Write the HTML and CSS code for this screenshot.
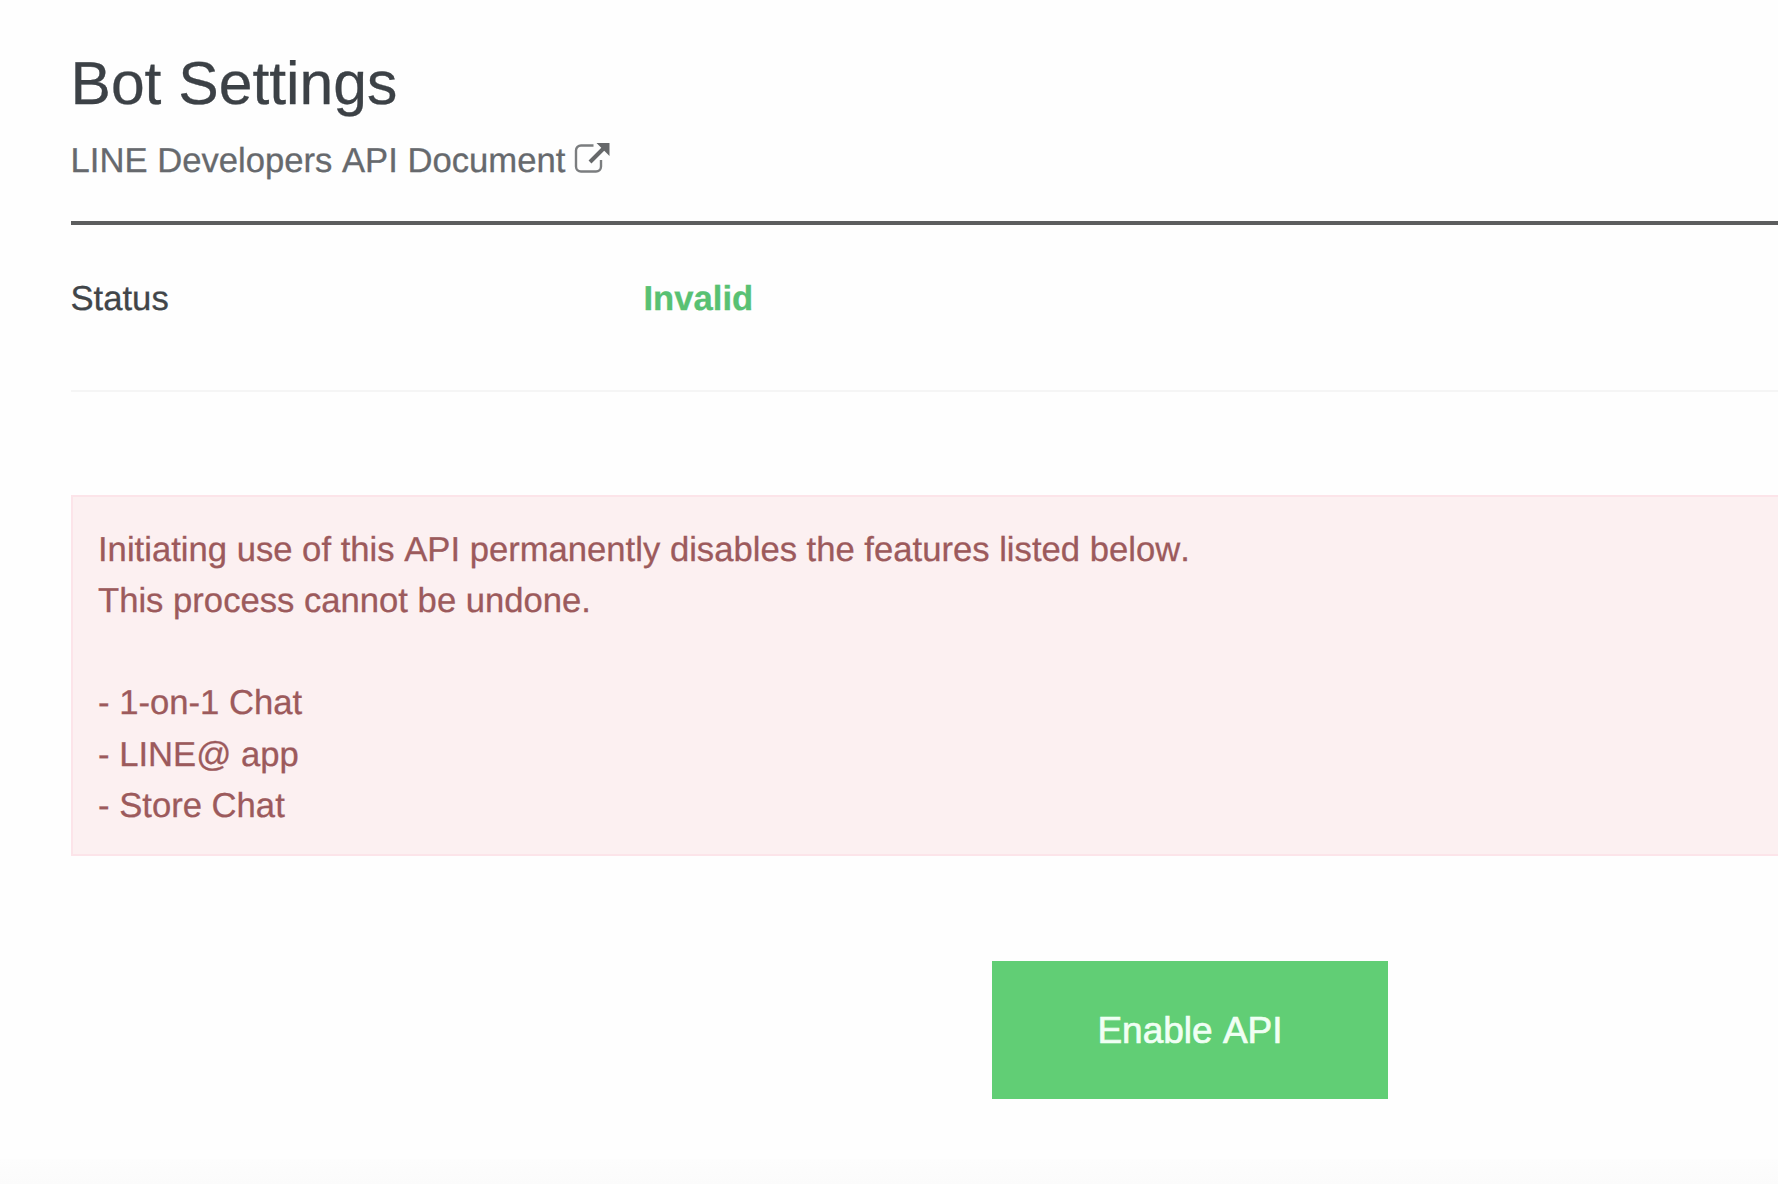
FILE: index.html
```html
<!DOCTYPE html>
<html lang="en">
<head>
<meta charset="utf-8">
<title>Bot Settings</title>
<link rel="stylesheet" href="styles.css">
</head>
<body>
<main class="page">
  <header class="page-header">
    <h1 class="title">Bot Settings</h1>
    <a class="doc-link" href="#"><span>LINE Developers API Document</span><svg class="external" viewBox="0 0 38 32" aria-hidden="true"><path d="M20.5 3.500H8a5 5 0 0 0-5 5v16a5 5 0 0 0 5 5h15a5 5 0 0 0 5-5V18" fill="none" stroke="#7b7d7f" stroke-width="2.4"/><path d="M17 20 31 6" fill="none" stroke="#66686a" stroke-width="4"/><path d="M23.500 1H36.500v13Z" fill="#66686a"/></svg></a>
  </header>
  <dl class="status-row">
    <dt class="status-label">Status</dt>
    <dd class="status-value">Invalid</dd>
  </dl>
  <section class="alert">
    <p>Initiating use of this API permanently disables the features listed below.<br>This process cannot be undone.</p>
    <ul class="features">
      <li>- 1-on-1 Chat</li>
      <li>- LINE@ app</li>
      <li>- Store Chat</li>
    </ul>
  </section>
  <div class="actions"><button class="enable" type="button">Enable API</button></div>
</main>
<footer class="footer"></footer>
</body>
</html>
```
FILE: styles.css
```css
* {
  box-sizing: border-box;
  margin: 0;
  padding: 0;
}

html {
  overflow: hidden;
}

body {
  height: 1184px;
  overflow: hidden;
  display: flex;
  flex-direction: column;
  background: #fefefe;
  color: #414549;
  font: 34.65px/51.2px "Liberation Sans", Arial, sans-serif;
  font-kerning: none;
  text-rendering: geometricPrecision;
  -webkit-text-stroke: 0.3px currentColor;
}

.page {
  height: 1159px;
  flex: none;
  margin-left: 70.5px;
}

.page-header {
  height: 225px;
  padding-top: 48px;
  border-bottom: 4px solid #5c5d5e;
}

.title {
  font-size: 60.6px;
  font-weight: 400;
  line-height: 71px;
  color: #3c4146;
}

.doc-link {
  display: flex;
  align-items: flex-start;
  margin-top: 15px;
  height: 51px;
  line-height: 51px;
  color: #66696d;
  text-decoration: none;
}

.doc-link span {
  margin-top: 2px;
}

.external {
  width: 38px;
  height: 32px;
  margin: 8px 0 0 8px;
}

.status-row {
  display: flex;
  height: 167px;
  padding-top: 49px;
  border-bottom: 2px solid #f5f5f5;
}

.status-label {
  width: 573px;
}

.status-value {
  color: #58c173;
  font-weight: 700;
}

/* Flush with the right edge of the window, so that side has no border. */
.alert {
  height: 361px;
  margin-top: 103px;
  padding: 28px 25.5px;
  border: 2px solid #fce4e9;
  border-right: 0;
  background: #fcf0f1;
  color: #9c5a5c;
}

.features {
  margin-top: 51px;
  list-style: none;
}

.actions {
  margin-top: 105px;
  padding-left: 921.5px;
}

.enable {
  display: block;
  width: 396px;
  height: 138px;
  padding-top: 1px;
  border: 0;
  background: #61ce75;
  color: #f0fff4;
  font: 37px "Liberation Sans", Arial, sans-serif;
  font-kerning: none;
  -webkit-text-stroke: 0.7px #f0fff4;
}

.footer {
  flex: 1;
  background: linear-gradient(#fdfdfd, #fbfbfb);
}
```
